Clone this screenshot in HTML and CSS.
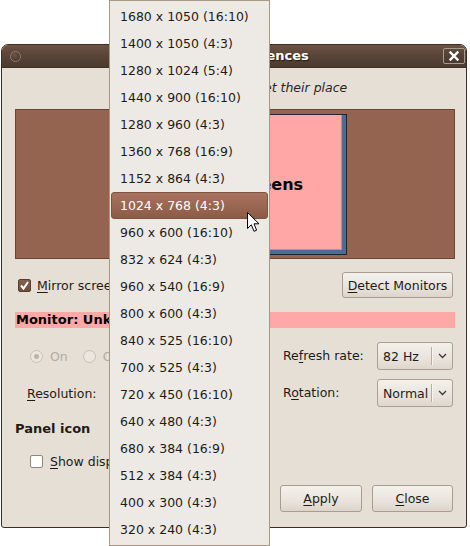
FILE: index.html
```html
<!DOCTYPE html>
<html>
<head>
<meta charset="utf-8">
<title>Monitor Preferences</title>
<link rel="stylesheet" href="styles.css">
</head>
<body>
<div class="window">
  <div class="titlebar">
    <span class="wm-menu"></span>
    <span class="title">Monitor Preferences</span>
    <span class="wm-close"><svg width="20" height="14" viewBox="0 0 20 14"><path d="M6.5 3.5 L13.5 10.5 M13.5 3.5 L6.5 10.5" stroke="#fff" stroke-width="2.4" stroke-linecap="square" fill="none"/></svg></span>
  </div>
  <div class="content">
    <p class="hint">Drag the monitors to set their place</p>
    <div class="preview">
      <div class="monitor"><span>Mirror Screens</span></div>
    </div>
    <div class="mirror-row">
      <label class="check">
        <span class="box checked"><svg width="11" height="11" viewBox="0 0 11 11"><path d="M2 5.5 L4.5 8.5 L9 2" stroke="#fff" stroke-width="2" fill="none"/></svg></span>
        <span><u>M</u>irror screens</span>
      </label>
      <button class="btn detect"><u>D</u>etect Monitors</button>
    </div>
    <div class="monitor-bar">Monitor: Unknown</div>
    <div class="settings">
      <div class="radios">
        <span class="radio on"></span><span class="rlabel">On</span>
        <span class="radio"></span><span class="rlabel">Off</span>
      </div>
      <span class="lbl">Re<u>f</u>resh rate:</span>
      <div class="combo"><span class="ctext">82 Hz</span><span class="sep"></span><span class="arrow"><svg width="9" height="6" viewBox="0 0 9 6"><path d="M1 1 L4.5 4.5 L8 1" stroke="#3a3a3a" stroke-width="1.3" fill="none"/></svg></span></div>
      <div class="res">
        <span><u>R</u>esolution:</span>
        <div class="combo res-combo"><span class="ctext">1024 x 768 (4:3)</span><span class="sep"></span><span class="arrow"><svg width="9" height="6" viewBox="0 0 9 6"><path d="M1 1 L4.5 4.5 L8 1" stroke="#3a3a3a" stroke-width="1.3" fill="none"/></svg></span></div>
      </div>
      <span class="lbl">R<u>o</u>tation:</span>
      <div class="combo"><span class="ctext">Normal</span><span class="sep"></span><span class="arrow"><svg width="9" height="6" viewBox="0 0 9 6"><path d="M1 1 L4.5 4.5 L8 1" stroke="#3a3a3a" stroke-width="1.3" fill="none"/></svg></span></div>
    </div>
    <div class="section">Panel icon</div>
    <label class="check show">
      <span class="box"></span>
      <span><u>S</u>how displays in panel</span>
    </label>
    <div class="actions">
      <button class="btn apply"><u>A</u>pply</button>
      <button class="btn close"><u>C</u>lose</button>
    </div>
  </div>
</div>

<div class="menu">
  <div class="item">1680 x 1050 (16:10)</div>
  <div class="item">1400 x 1050 (4:3)</div>
  <div class="item">1280 x 1024 (5:4)</div>
  <div class="item">1440 x 900 (16:10)</div>
  <div class="item">1280 x 960 (4:3)</div>
  <div class="item">1360 x 768 (16:9)</div>
  <div class="item">1152 x 864 (4:3)</div>
  <div class="item selected">1024 x 768 (4:3)</div>
  <div class="item">960 x 600 (16:10)</div>
  <div class="item">832 x 624 (4:3)</div>
  <div class="item">960 x 540 (16:9)</div>
  <div class="item">800 x 600 (4:3)</div>
  <div class="item">840 x 525 (16:10)</div>
  <div class="item">700 x 525 (4:3)</div>
  <div class="item">720 x 450 (16:10)</div>
  <div class="item">640 x 480 (4:3)</div>
  <div class="item">680 x 384 (16:9)</div>
  <div class="item">512 x 384 (4:3)</div>
  <div class="item">400 x 300 (4:3)</div>
  <div class="item">320 x 240 (4:3)</div>
</div>

<svg class="cursor" width="14" height="21" viewBox="0 0 14 21"><path d="M0.5 0.5 L0.5 16.5 L4.3 12.8 L7 19.3 L9.6 18.2 L7 11.8 L12 11.8 Z" fill="#fff" stroke="#000" stroke-width="1" stroke-linejoin="round"/></svg>
</body>
</html>
```

FILE: styles.css
```css
html, body {
  margin: 0;
  padding: 0;
}
body {
  width: 470px;
  height: 546px;
  overflow: hidden;
  position: relative;
  background: #ffffff;
  font-family: "DejaVu Sans", "Noto Sans", sans-serif;
  font-size: 12.5px;
  color: #1e1b18;
}
u { text-decoration: underline; text-underline-offset: 2px; }

.window {
  position: absolute;
  left: 1px;
  top: 44px;
  width: 466px;
  height: 484px;
  box-sizing: border-box;
  border: 1px solid #3a2e26;
  border-radius: 7px 7px 3px 3px;
  background: #e6dfd6;
  display: flex;
  flex-direction: column;
  overflow: hidden;
}

.titlebar {
  flex: none;
  height: 23px;
  display: grid;
  grid-template-columns: 1fr auto 1fr;
  align-items: center;
  background: linear-gradient(#6c5444, #5a4538 45%, #4c3a2f);
  border-bottom: 1px solid #3f3128;
  box-sizing: border-box;
}
.wm-menu {
  justify-self: start;
  margin-left: 8px;
  width: 9px;
  height: 9px;
  border-radius: 50%;
  border: 1px solid #8e7c70;
  background: radial-gradient(circle at 40% 35%, #6a5548, #3f3128);
}
.title {
  font-weight: bold;
  font-size: 13px;
  color: #ffffff;
  text-shadow: 1px 1px 1px #241a14;
  line-height: 16px;
}
.wm-close {
  justify-self: end;
  margin-right: 1px;
  width: 20px;
  height: 14px;
  border: 1px solid #a8998e;
  border-radius: 2px;
  background: linear-gradient(#5e493d, #4a382e);
  display: flex;
}

.content {
  flex: 1;
  display: flex;
  flex-direction: column;
  padding: 0 11px 0 13px;
}
.hint {
  margin: 12px 0 0;
  line-height: 16px;
  text-align: center;
  font-style: italic;
  color: #2a2520;
}

.preview {
  position: relative;
  margin-top: 13px;
  height: 150px;
  box-sizing: border-box;
  background: #956450;
  border: 1px solid #6a4636;
}
.monitor {
  position: absolute;
  left: 108px;
  top: 4px;
  width: 223px;
  height: 141px;
  box-sizing: border-box;
  border: 1px solid #1e2530;
  background: #ffa6a6;
  box-shadow: inset -4px -4px 0 #4f6b94, inset -5px -5px 0 #8aa0c0;
  display: flex;
  align-items: center;
  justify-content: center;
  padding-left: 2px;
  font-weight: bold;
  font-size: 16px;
  color: #000;
}

.check {
  display: flex;
  align-items: center;
  gap: 6px;
}
.box {
  width: 13px;
  height: 13px;
  box-sizing: border-box;
  border: 1px solid #8f857b;
  border-radius: 2px;
  background: #ffffff;
  display: flex;
  align-items: center;
  justify-content: center;
}
.box.checked {
  background: linear-gradient(#86604c, #6c4d3c);
  border-color: #5a3f30;
}

.mirror-row {
  margin-top: 13px;
  height: 26px;
  display: flex;
  align-items: center;
  justify-content: space-between;
}
.mirror-row .check { margin-left: 3px; }

.btn {
  font-family: inherit;
  font-size: 12.5px;
  color: #1e1b18;
  border: 1px solid #a89d91;
  border-radius: 3px;
  background: linear-gradient(#f4f1ec, #e9e3dc 60%, #ddd5cb);
  padding: 0;
  box-sizing: border-box;
}
.detect {
  width: 111px;
  height: 26px;
  margin-right: 2px;
}

.monitor-bar {
  margin-top: 14px;
  height: 16px;
  line-height: 16px;
  background: #ffa8a8;
  font-weight: bold;
  font-size: 13px;
  color: #000;
  padding-left: 1px;
}

.settings {
  margin-top: 14px;
  display: grid;
  grid-template-columns: 268px 94px 76px;
  grid-auto-rows: 28px;
  row-gap: 9px;
  align-items: center;
}
.radios {
  display: flex;
  align-items: center;
  padding-left: 15px;
  color: #b3aa9f;
}
.radio {
  width: 13px;
  height: 13px;
  box-sizing: border-box;
  border-radius: 50%;
  border: 1px solid #c8bfb5;
  background: #ebe6df;
  margin-right: 7px;
  display: flex;
  align-items: center;
  justify-content: center;
}
.radio.on::after {
  content: "";
  width: 5px;
  height: 5px;
  border-radius: 50%;
  background: #bdb3a8;
}
.rlabel { margin-right: 15px; }
.lbl { line-height: 16px; }
.res {
  display: flex;
  align-items: center;
  padding-left: 12px;
}
.res-combo {
  margin-left: 14px;
  width: 155px;
}

.combo {
  height: 28px;
  box-sizing: border-box;
  border: 1px solid #aaa094;
  border-radius: 3px;
  background: linear-gradient(#f3f0eb, #e9e3dc 60%, #dfd7cd);
  display: flex;
  align-items: center;
}
.ctext {
  flex: 1;
  padding-left: 5px;
  white-space: nowrap;
  overflow: hidden;
}
.sep {
  width: 1px;
  align-self: stretch;
  margin: 4px 0;
  background: #b8aea3;
  box-shadow: 1px 0 0 #f8f5f1;
}
.arrow {
  width: 20px;
  display: flex;
  justify-content: center;
}

.section {
  margin-top: 14px;
  line-height: 16px;
  font-weight: bold;
  font-size: 13px;
}
.show {
  margin-top: 16px;
  height: 16px;
  margin-left: 15px;
  gap: 7px;
}

.actions {
  margin-top: 16px;
  display: flex;
  justify-content: flex-end;
  gap: 10px;
  padding-right: 2px;
}
.apply { width: 82px; height: 27px; }
.close { width: 81px; height: 27px; }

.menu {
  position: absolute;
  left: 109px;
  top: 0;
  width: 161px;
  box-sizing: border-box;
  border: 1px solid #a79885;
  background: #edeae5;
  padding: 2px 0;
}
.item {
  height: 27px;
  box-sizing: border-box;
  margin: 0 1px;
  padding-left: 9px;
  display: flex;
  align-items: center;
  white-space: nowrap;
  color: #1f1b17;
}
.item.selected {
  padding-left: 8px;
  border: 1px solid #7f533f;
  border-radius: 3px;
  background: linear-gradient(#a87260, #9a6752 50%, #8c5b46);
  color: #ffffff;
}

.cursor {
  position: absolute;
  left: 247px;
  top: 212px;
}
```
